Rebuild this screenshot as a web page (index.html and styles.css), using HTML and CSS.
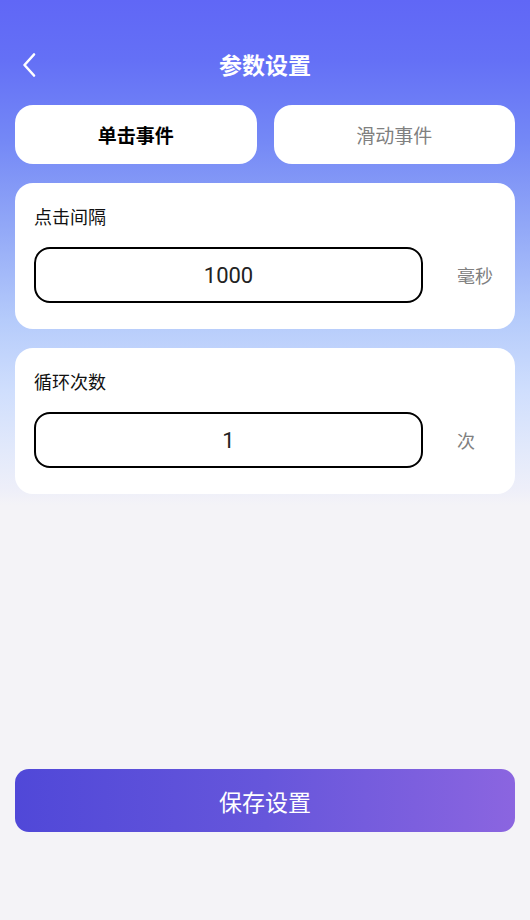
FILE: index.html
```html
<!DOCTYPE html>
<html lang="zh-CN">
<head>
<meta charset="utf-8">
<title>参数设置</title>
<link rel="stylesheet" href="styles.css">
</head>
<body>
<div class="page">
  <header class="nav">
    <span class="back">
      <svg width="16" height="26" viewBox="0 0 16 26"><path d="M13 2.5 L3.5 13 L13 23.5" fill="none" stroke="#fff" stroke-width="2.6" stroke-linecap="round" stroke-linejoin="round"/></svg>
    </span>
    <h1 class="title">参数设置</h1>
  </header>
  <div class="tabs">
    <div class="tab active">单击事件</div>
    <div class="tab">滑动事件</div>
  </div>
  <section class="card">
    <div class="label">点击间隔</div>
    <div class="row">
      <div class="field">1000</div>
      <div class="unit">毫秒</div>
    </div>
  </section>
  <section class="card">
    <div class="label">循环次数</div>
    <div class="row">
      <div class="field">1</div>
      <div class="unit">次</div>
    </div>
  </section>
  <div class="footer">
    <button class="save">保存设置</button>
  </div>
</div>
</body>
</html>
```
FILE: styles.css
```css
html, body {
  margin: 0;
  padding: 0;
}
body {
  background: #f4f3f7;
  font-family: "Noto Sans CJK SC", "Noto Sans", sans-serif;
}
.page {
  height: 920px;
  box-sizing: border-box;
  display: flex;
  flex-direction: column;
  padding: 0 15px 88px;
  background: linear-gradient(180deg, #6067f6 0px, #6470f6 60px, #7488f6 140px, #93a9f7 230px, #b5cbfb 320px, #cfdefd 390px, #e2e9fb 450px, #eeeff9 490px, #f4f3f7 505px, #f4f3f7 100%);
}
.nav {
  position: relative;
  height: 52px;
  margin-top: 38px;
  display: flex;
  align-items: center;
  justify-content: center;
}
.back {
  position: absolute;
  left: 6px;
  top: 14px;
  display: flex;
}
.title {
  margin: 0;
  color: #fff;
  font-size: 23px;
  font-weight: 700;
  line-height: 52px;
}
.tabs {
  margin-top: 15px;
  display: flex;
  gap: 17px;
}
.tab {
  flex: 1;
  height: 59px;
  border-radius: 18px;
  background: #fff;
  display: flex;
  align-items: center;
  justify-content: center;
  font-size: 19px;
  color: #808080;
}
.tab.active {
  color: #000;
  font-weight: 700;
}
.card {
  margin-top: 19px;
  background: #fff;
  border-radius: 18px;
  padding: 19px 19px 26px;
  height: 146px;
  box-sizing: border-box;
}
.label {
  font-size: 18px;
  line-height: 28px;
  color: #111;
}
.row {
  margin-top: 17px;
  display: flex;
  align-items: center;
}
.field {
  width: 389px;
  height: 56px;
  box-sizing: border-box;
  border: 2px solid #000;
  border-radius: 16px;
  display: flex;
  align-items: center;
  justify-content: center;
  font-family: Roboto, "Noto Sans", sans-serif;
  font-size: 22px;
  color: #222;
}
.unit {
  padding-left: 34px;
  font-size: 18px;
  color: #808080;
}
.footer {
  margin-top: auto;
}
.save {
  width: 100%;
  height: 63px;
  border: 0;
  border-radius: 14px;
  background: linear-gradient(90deg, #5048d8 0%, #6656db 50%, #8b65e0 100%);
  color: #fff;
  font-family: "Noto Sans CJK SC", "Noto Sans", sans-serif;
  font-size: 23px;
  display: block;
  padding: 0;
}
```
